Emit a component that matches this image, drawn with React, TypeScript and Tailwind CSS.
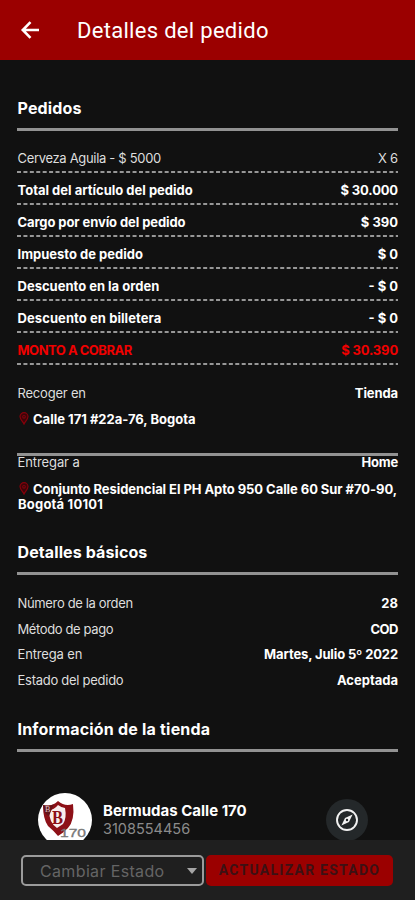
import React from 'react';

const Pin = () => (
  <svg className="mr-[4px] ml-[1px] inline-block h-[13px] w-[10px] align-[-1px]" viewBox="0 0 10 13" fill="#3c0508" stroke="#86000b" strokeWidth="1.2">
    <path d="M5 12 C4 9.7 1 7.5 1 4.6 A4 3.9 0 0 1 9 4.6 C9 7.5 6 9.7 5 12Z" />
    <circle cx="5" cy="4.8" r="1.3" fill="#111111" />
  </svg>
);

const Heading = ({ children, spacing }: { children: React.ReactNode; spacing: string }) => (
  <h2 className="flex h-[35px] items-start border-b-[3px] border-[#929292] pl-[0.5px] text-[16px] leading-[24px] font-bold text-white">
    <span className={spacing}>{children}</span>
  </h2>
);

const charges = [
  { label: 'Cerveza Aguila - $ 5000', value: 'X 6', tone: 'text-[#dedede]', ls: 'tracking-[-0.32px]', rs: 'tracking-[-0.2px]' },
  { label: 'Total del artículo del pedido', value: '$ 30.000', tone: 'font-bold text-white', ls: '', rs: 'tracking-[-0.15px]' },
  { label: 'Cargo por envío del pedido', value: '$ 390', tone: 'font-bold text-white', ls: 'tracking-[-0.09px]', rs: '' },
  { label: 'Impuesto de pedido', value: '$ 0', tone: 'font-bold text-white', ls: '', rs: '' },
  { label: 'Descuento en la orden', value: '- $ 0', tone: 'font-bold text-white', ls: '', rs: '' },
  { label: 'Descuento en billetera', value: '- $ 0', tone: 'font-bold text-white', ls: 'tracking-[0.08px]', rs: '' },
  { label: 'MONTO A COBRAR', value: '$ 30.390', tone: 'font-bold text-[#f00000]', ls: 'tracking-[-0.5px]', rs: 'tracking-[-0.15px]' },
];

const details = [
  { label: 'Número de la orden', value: '28', ls: 'tracking-[-0.35px]', rs: '' },
  { label: 'Método de pago', value: 'COD', ls: 'tracking-[-0.38px]', rs: 'tracking-[-0.5px]' },
  { label: 'Entrega en', value: 'Martes, Julio 5º 2022', ls: 'tracking-[-0.15px]', rs: 'tracking-[-0.13px]' },
  { label: 'Estado del pedido', value: 'Aceptada', ls: 'tracking-[-0.27px]', rs: '' },
];

export default function App() {
  return (
    <div className="flex h-[900px] w-[415px] flex-col overflow-hidden bg-[#111111] font-['Inter',sans-serif] text-[13px] whitespace-nowrap">
      <header className="flex h-[60px] shrink-0 items-center bg-[#9b0000] pl-[20px] text-white">
        <svg className="h-[20px] w-[20px]" viewBox="0 0 20 20" fill="none" stroke="white" strokeWidth="2.6">
          <path d="M19 10H3M10.5 2.2L2.8 10L10.5 17.8" />
        </svg>
        <h1 className="ml-[37px] pt-[2px] font-['Roboto',sans-serif] text-[22px] leading-[28px] tracking-[0.3px]">Detalles del pedido</h1>
      </header>

      <main className="h-[780px] shrink-0 overflow-hidden px-[17px] pt-[36px]">
        <Heading spacing="tracking-[0.15px]">Pedidos</Heading>
        <div className="mt-[10px] flex flex-col">
          {charges.map((c) => (
            <div key={c.label} className={`flex h-[32px] flex-col ${c.tone}`}>
              <div className="flex h-[30px] items-end justify-between pb-[4px] pl-[0.5px] leading-[18px]">
                <span className={c.ls}>{c.label}</span>
                <span className={c.rs}>{c.value}</span>
              </div>
              <svg className="h-[2px] w-full" viewBox="0 0 381 2" preserveAspectRatio="none">
                <path d="M0 1H381" stroke="#c4c4c4" strokeWidth="1.4" strokeDasharray="4 2.42" />
              </svg>
            </div>
          ))}
        </div>

        <div className="mt-[19px] flex justify-between pl-[0.5px] leading-[18px]">
          <span className="tracking-[-0.2px] text-[#dedede]">Recoger en</span>
          <span className="font-bold tracking-[-0.1px] text-white">Tienda</span>
        </div>
        <p className="mt-[10px] h-[41px] pl-[1px] leading-[15px] font-bold text-white"><Pin />Calle 171 #22a-76, Bogota</p>
        <div className="flex h-[18px] items-end justify-between border-t-[3px] border-[#929292] pl-[0.5px] leading-[18px]">
          <span className="tracking-[-0.1px] text-[#dedede]">Entregar a</span>
          <span className="font-bold tracking-[-0.2px] text-white">Home</span>
        </div>
        <p className="mt-[11px] pl-[1px] leading-[15px] font-bold tracking-[-0.06px] text-white"><Pin />Conjunto Residencial El PH Apto 950 Calle 60 Sur #70-90,<br /><span className="tracking-[0.2px]">Bogotá 10101</span></p>

        <div className="mt-[28px]"><Heading spacing="tracking-[0.1px]">Detalles básicos</Heading></div>
        <div className="mt-[16px] flex flex-col">
          {details.map((d) => (
            <div key={d.label} className="flex h-[25.5px] items-center justify-between pl-[0.5px]">
              <span className={`text-[#dedede] ${d.ls}`}>{d.label}</span>
              <span className={`font-bold text-white ${d.rs}`}>{d.value}</span>
            </div>
          ))}
        </div>
        <div className="mt-[24px]"><Heading spacing="tracking-[0.2px]">Información de la tienda</Heading></div>

        <section className="mt-[41px] flex h-[56px] items-start pr-[30px] pl-[21px]">
          <svg className="h-[54px] w-[54px] shrink-0 rounded-full bg-white" viewBox="0 0 54 54">
            <path d="M5 12 Q14 14 20 8 Q27 14 35 11 Q37 27 30 35 Q25 40 20 43 Q16 38 10 33 Q5 26 5 12Z" fill="#8d1017" />
            <path d="M11 17 Q16 17 20 12 Q24 15 27 15 Q29 25 25 31 L19 35 Q11 30 11 17Z" fill="#f7eeee" />
            <path d="M5 12Q12 14 16 11L11 23Q6 22 5 12Z" fill="#651419" />
            <text x="7" y="19" fontSize="8" fill="#dfc6c8" fontFamily="Liberation Serif">B</text>
            <text x="14" y="31" fontSize="18" fontWeight="bold" fill="#8d1017" fontFamily="Liberation Serif" textLength="11" lengthAdjust="spacingAndGlyphs">B</text>
            <text x="22" y="43.5" fontSize="10" fill="#777" stroke="#777" strokeWidth=".3" fontFamily="Liberation Sans" textLength="26" lengthAdjust="spacingAndGlyphs">170</text>
          </svg>
          <div className="mt-[9px] ml-[11px] flex flex-col">
            <span className="text-[15px] leading-[18px] font-bold text-white">Bermudas Calle 170</span>
            <span className="text-[14.5px] leading-[18px] text-[#8b8b8b]">3108554456</span>
          </div>
          <div className="mt-[6px] ml-auto flex h-[42px] w-[42px] items-center justify-center rounded-full bg-[#24282a]">
            <svg className="h-[24px] w-[24px]" viewBox="0 0 24 24" fill="none">
              <circle cx="12" cy="12" r="10" stroke="#f2f2f2" strokeWidth="1.9" />
              <path fillRule="evenodd" d="M17.6 6.4L14 14L6.4 17.6L10 10ZM12 10.8A1.2 1.2 0 1 0 12 13.2A1.2 1.2 0 1 0 12 10.8Z" fill="#f2f2f2" />
            </svg>
          </div>
        </section>
      </main>

      <footer className="flex h-[60px] shrink-0 items-start gap-[2px] bg-[#1f1f1f] pt-[15px] pl-[21px]">
        <button className="flex h-[31px] w-[183px] items-center justify-between rounded-[5px] border-2 border-[#9b9b9b] pr-[5px] pl-[17px] text-[16px] tracking-[0.35px] text-[#656565]">
          <span>Cambiar Estado</span>
          <svg className="h-[6px] w-[10px]" viewBox="0 0 10 6" fill="#a5a5a5"><path d="M0 0H10L5 6Z" /></svg>
        </button>
        <button className="flex h-[31px] w-[187px] items-center justify-center rounded-[5px] bg-[#9b0000] font-['Roboto',sans-serif] text-[14px] font-bold tracking-[1.25px] text-[#3c1114]">ACTUALIZAR ESTADO</button>
      </footer>
    </div>
  );
}
